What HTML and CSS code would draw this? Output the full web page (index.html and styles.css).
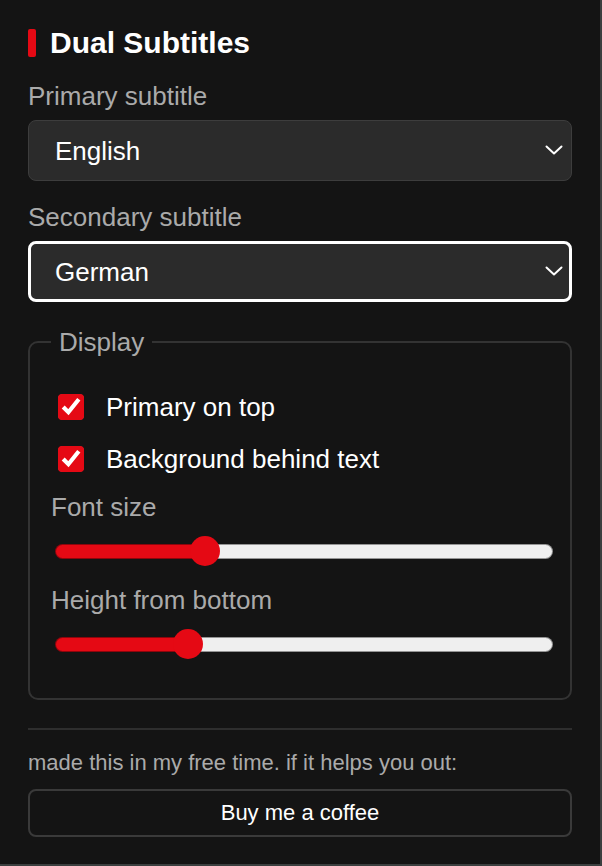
FILE: index.html
```html
<!DOCTYPE html>
<html lang="en">
<head>
<meta charset="utf-8">
<title>Dual Subtitles</title>
<link rel="stylesheet" href="styles.css">
</head>
<body>
  <h1 class="title"><span class="title-bar"></span>Dual Subtitles</h1>

  <div class="group">
    <label class="label" for="primary">Primary subtitle</label>
    <div class="select-wrap">
      <select id="primary" class="select">
        <option selected>English</option>
        <option>German</option>
      </select>
      <svg class="chevron" width="18" height="10" viewBox="0 0 18 10"><path d="M1.5 1.5 L9 8.5 L16.5 1.5" fill="none" stroke="#fff" stroke-width="2" stroke-linecap="round" stroke-linejoin="round"/></svg>
    </div>
  </div>

  <div class="group">
    <label class="label" for="secondary">Secondary subtitle</label>
    <div class="select-wrap">
      <select id="secondary" class="select is-focused">
        <option>English</option>
        <option selected>German</option>
      </select>
      <svg class="chevron" width="18" height="10" viewBox="0 0 18 10"><path d="M1.5 1.5 L9 8.5 L16.5 1.5" fill="none" stroke="#fff" stroke-width="2" stroke-linecap="round" stroke-linejoin="round"/></svg>
    </div>
  </div>

  <fieldset class="display">
    <legend class="legend">Display</legend>
    <label class="check-row"><input type="checkbox" class="check" checked><span>Primary on top</span></label>
    <label class="check-row"><input type="checkbox" class="check" checked><span>Background behind text</span></label>

    <div class="sliders">
      <div class="field">
        <label class="label" for="fs">Font size</label>
        <input id="fs" class="range" type="range" min="0" max="1000" value="287" style="--p: 0.287">
      </div>
      <div class="field">
        <label class="label" for="hb">Height from bottom</label>
        <input id="hb" class="range" type="range" min="0" max="1000" value="251" style="--p: 0.251">
      </div>
    </div>
  </fieldset>

  <hr class="divider">

  <p class="note">made this in my free time. if it helps you out:</p>
  <button class="coffee" type="button">Buy me a coffee</button>
</body>
</html>
```

FILE: styles.css
```css
html {
  background: #3b3f3f;
}

body {
  margin: 0;
  width: 600px;
  height: 864px;
  box-sizing: border-box;
  padding: 26px 28px 0 28px;
  background: #141414;
  font-family: "Liberation Sans", Arial, sans-serif;
  color: #fff;
  overflow: hidden;
}

.title {
  display: flex;
  align-items: center;
  gap: 14px;
  margin: 0 0 21px 0;
  font-size: 30px;
  line-height: 34px;
  font-weight: 700;
}

.title-bar {
  width: 8px;
  height: 28px;
  border-radius: 2px;
  background: #e50914;
}

.group {
  display: flex;
  flex-direction: column;
  gap: 9px;
  margin-bottom: 21px;
}

.label {
  display: block;
  font-size: 26px;
  line-height: 30px;
  color: #aaaaaa;
}

.select-wrap {
  position: relative;
}

.select {
  appearance: none;
  -webkit-appearance: none;
  display: block;
  width: 100%;
  height: 61px;
  box-sizing: border-box;
  margin: 0;
  padding: 0 50px 0 26px;
  background: #2b2b2b;
  border: 1px solid #3d3d3d;
  border-radius: 8px;
  color: #fff;
  font-family: inherit;
  font-size: 26px;
  outline: none;
}

.select.is-focused {
  border: 3px solid #fff;
  padding-left: 24px;
}

.chevron {
  position: absolute;
  right: 9px;
  top: 25px;
  pointer-events: none;
}

.display {
  margin: 25px 0 0 0;
  padding: 35px 13px 39px 21px;
  border: 2px solid #333333;
  border-radius: 10px;
}

.legend {
  padding: 0 8px;
  font-size: 26px;
  line-height: 30px;
  color: #aaaaaa;
}

.check-row {
  display: flex;
  align-items: center;
  gap: 22px;
  padding-left: 7px;
  font-size: 26px;
  line-height: 30px;
  color: #fff;
}

.check-row + .check-row {
  margin-top: 22px;
}

.check {
  margin: 0;
  zoom: 2;
  accent-color: #e50914;
}

.sliders {
  display: flex;
  flex-direction: column;
  gap: 19px;
  margin-top: 18px;
}

.field {
  display: flex;
  flex-direction: column;
  gap: 14px;
}

.range {
  -webkit-appearance: none;
  appearance: none;
  display: block;
  margin: 0 4px;
  height: 30px;
  background: transparent;
}

.range::-webkit-slider-runnable-track {
  height: 15px;
  box-sizing: border-box;
  border-radius: 8px;
  border: 1px solid rgba(0, 0, 0, 0.38);
  background-origin: border-box;
  background-repeat: no-repeat;
  background-image: linear-gradient(to right,
    #e50914 0,
    #e50914 calc(15px + (100% - 30px) * var(--p)),
    #efefef calc(15px + (100% - 30px) * var(--p)),
    #efefef 100%);
}

.range::-webkit-slider-thumb {
  -webkit-appearance: none;
  appearance: none;
  width: 30px;
  height: 30px;
  margin-top: -8.5px;
  border: none;
  border-radius: 50%;
  background: #e50914;
}

.divider {
  margin: 28px 0 0 0;
  height: 2px;
  border: none;
  background: #2e2e2e;
}

.note {
  margin: 20px 0 0 0;
  font-size: 22px;
  line-height: 25px;
  color: #aaaaaa;
}

.coffee {
  display: block;
  width: 100%;
  height: 48px;
  margin-top: 14px;
  box-sizing: border-box;
  background: transparent;
  border: 2px solid #3a3a3a;
  border-radius: 8px;
  color: #fff;
  font-family: inherit;
  font-size: 22px;
}
```
